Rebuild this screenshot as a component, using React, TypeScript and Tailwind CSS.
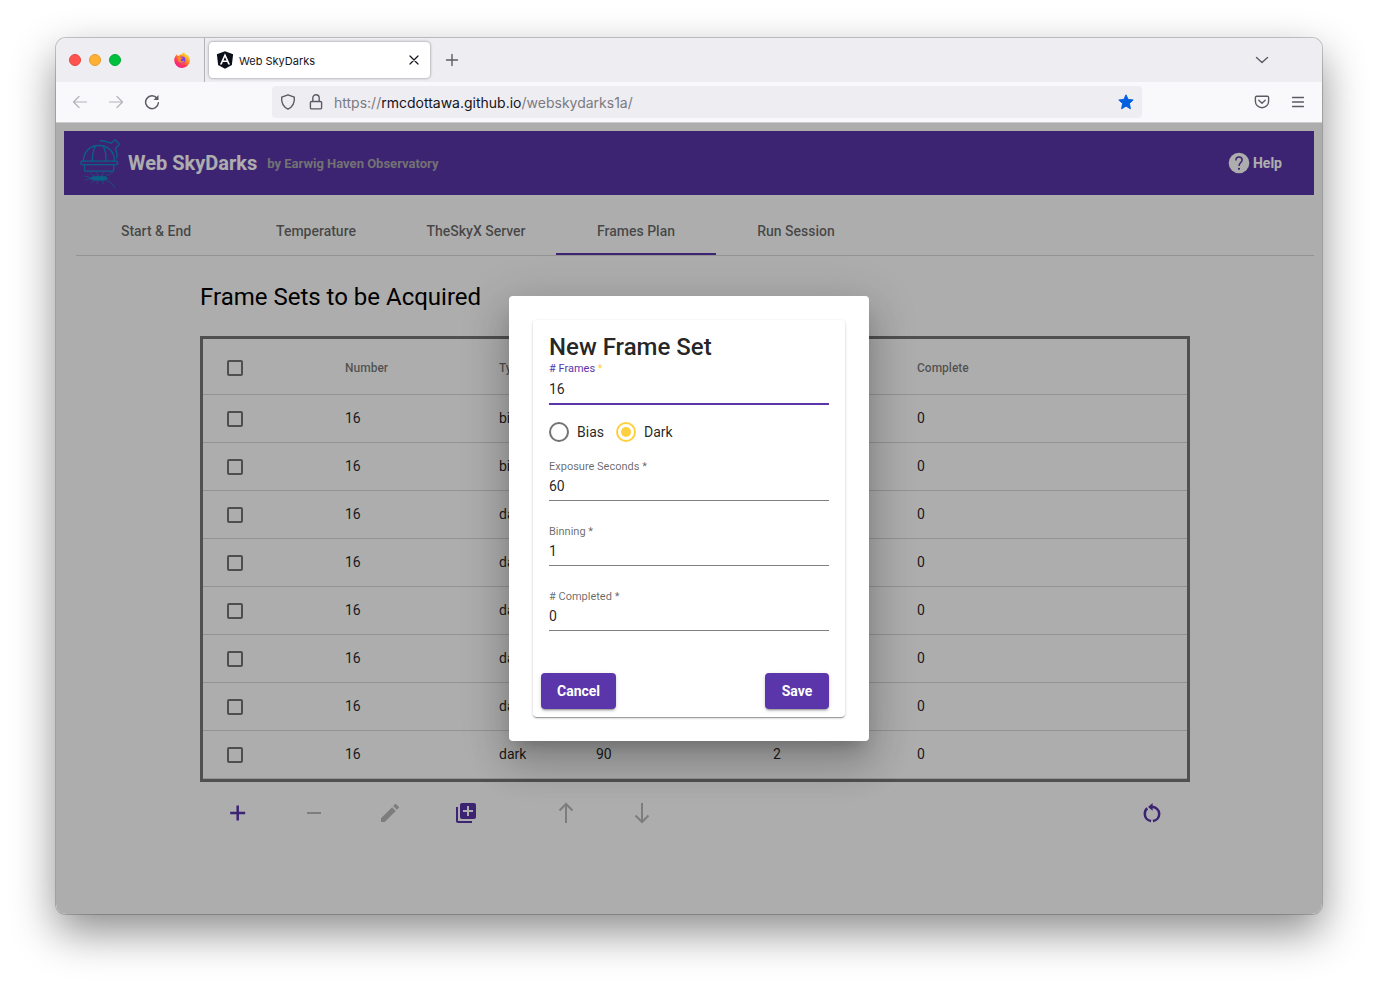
import React from "react";
import { FaAngular } from "react-icons/fa";
import { MdEdit, MdLibraryAdd, MdRemove } from "react-icons/md";

type LineIconProps = { d: string; className?: string; width?: number };

function LineIcon({ d, className = "size-4", width = 1.2 }: LineIconProps) {
  return (
    <svg
      viewBox="0 0 16 16"
      className={className}
      fill="none"
      stroke="currentColor"
      strokeWidth={width}
      strokeLinecap="round"
      strokeLinejoin="round"
      aria-hidden="true"
    >
      <path d={d} />
    </svg>
  );
}

function FirefoxIcon() {
  return (
    <svg viewBox="0 0 16 16" className="size-4" aria-hidden="true">
      <defs>
        <linearGradient id="fx-body" x1="0.85" y1="0.05" x2="0.2" y2="0.95">
          <stop offset="0" stopColor="#fff04a" />
          <stop offset="0.35" stopColor="#ff9a1f" />
          <stop offset="0.65" stopColor="#ff4550" />
          <stop offset="1" stopColor="#f5158c" />
        </linearGradient>
      </defs>
      <path
        d="M10.3.3c.4 1.4 1.3 2 2.2 2.8.3-.3.2-.8.2-.8 2 1.500 3.200 3.600 3.200 6.100A7.700 7.700 0 0 1 8.100 16 7.800 7.800 0 0 1 .2 8.300C.2 6.300.9 4.600 1.900 3.400l.5-1.100.9 1.500c.5-.2 1.100-.2 1.700-.1C6 2.700 7 2.300 8 2.300 8.500 1.300 9.200.6 10.300.3z"
        fill="url(#fx-body)"
      />
      <circle cx="8.200" cy="7.700" r="3.200" fill="#7a3ff2" />
      <path d="M3.500 5.200c1.200-.7 2.500-.6 3.500.2l1.800.3c-.1.900-.9 1.100-1.600 1.500-.9.500-.7 1.900 1 2 1.100 0 1.500-.7 2.500-.4-.7 1.700-2.400 2.300-4.100 1.800C4.500 10 3.300 7.700 3.500 5.200z" fill="#ff8a2a" />
    </svg>
  );
}

function ObservatoryLogo() {
  return (
    <svg
      viewBox="0 0 42 52"
      className="h-[52px] w-[42px] shrink-0"
      fill="none"
      stroke="#0f8fc4"
      strokeWidth="1.300"
      strokeLinecap="round"
      strokeLinejoin="round"
      aria-hidden="true"
    >
      <path d="M3.500 24C3.500 14.500 10 8.500 19 8.500s15.500 6 15.500 15.500" />
      <path d="M12.500 24c-.3-6.500.8-11.500 3.200-15.300M26 24c.3-6.500-.8-11.500-3.200-15.300" />
      <rect x="0.800" y="24.200" width="37" height="3.400" rx="1.700" />
      <path d="M4.500 28v4.500c0 1 .6 1.600 1.600 1.600h26c1 0 1.600-.6 1.600-1.600V28" />
      <path d="M20 3.800c4-.3 6.500.6 8.500 1.600l3 .6 3.500-3.400 4.400 4.700-3.600 3.700.2 2.400c1.200 2.500 1.200 5 .8 7.500" />
      <path
        strokeWidth="0.800"
        d="M10 41.300c3-2.400 6-1.900 9-1.900s6-.8 8.500 1.900c-2.500 2.700-5.500 1.900-8.500 1.900s-6 .5-9-1.900z"
        fill="#0f8fc4"
      />
      <path
        strokeWidth="0.700"
        d="M10 41c-2-1.200-3.500-1.700-5-1.700M10 41.600c-2 .8-3 1.300-4.500 1.200M14 39l-3-2.500M14 43.500l-3 2.800M18 39l-1-3.300M18 43.500l-1 3.300M22 39l1.500-3.300M22 43.500l1.500 3.300M25 40l5-3.300 4-2.700M25 42.500l5 2.500 3 3 2 3"
      />
    </svg>
  );
}

function BrowserChrome() {
  return (
    <header className="shrink-0">
      <div className="flex h-11 items-center bg-[#eeedf2] pl-[13px]">
        <div className="flex gap-2">
          <button aria-label="Close window" className="size-3 rounded-full border border-[#e6453f] bg-[#ff544d]" />
          <button aria-label="Minimize window" className="size-3 rounded-full border border-[#e79c2b] bg-[#ffb032]" />
          <button aria-label="Zoom window" className="size-3 rounded-full border border-[#00ab38] bg-[#00c03d]" />
        </div>
        <button aria-label="Firefox View" className="mr-3.5 ml-[53px]">
          <FirefoxIcon />
        </button>
        <div className="h-full w-px bg-[#b2b1b6]" />
        <div className="ml-1 flex h-9 w-[221px] items-center rounded bg-white px-1.5 shadow-[0_0_3px_rgba(0,0,0,0.45)]">
          <FaAngular className="size-5 text-[#0b0f19]" aria-hidden="true" />
          <span className="ml-1 flex-1 pt-0.5 font-[Inter,sans-serif] text-[11px] text-[#15141a]">Web SkyDarks</span>
          <button aria-label="Close tab" className="flex size-5 items-center justify-center text-[#15141a]">
            <LineIcon d="M4 4l8 8M12 4l-8 8" />
          </button>
        </div>
        <button aria-label="New tab" className="ml-1.5 flex size-8 items-center justify-center text-[#5b5b66]">
          <LineIcon d="M8 2.500v11M2.500 8h11" width={1.4} />
        </button>
        <button aria-label="List all tabs" className="mr-[42px] ml-auto flex size-9 items-center justify-center text-[#5b5b66]">
          <LineIcon d="M2.500 5.500L8 10.500l5.500-5" width={1.4} />
        </button>
      </div>
      <div className="flex h-[41px] items-center border-b border-[#cccccf] bg-[#f9f9fb] px-1.5">
        <button aria-label="Back" className="flex size-9 items-center justify-center text-[#b3b3b9]">
          <LineIcon d="M14.500 8h-13M7 2.500L1.500 8 7 13.500" />
        </button>
        <button aria-label="Forward" className="flex size-9 items-center justify-center text-[#b3b3b9]">
          <LineIcon d="M1.500 8h13M9 2.500L14.500 8 9 13.500" />
        </button>
        <button aria-label="Reload" className="flex size-9 items-center justify-center text-[#5b5b66]">
          <svg viewBox="0 0 16 16" className="size-4" fill="none" stroke="currentColor" strokeWidth="1.500" strokeLinecap="round" aria-hidden="true">
            <path d="M13 4.200A6.400 6.400 0 1 0 14.400 8.800" />
            <path d="M14.500 1v5h-5z" fill="currentColor" stroke="none" />
          </svg>
        </button>
        <div className="mx-[102px] flex h-8 flex-1 items-center rounded bg-[#eeedf2] px-2 text-[#5b5b66]">
          <LineIcon d="M8 .8l6.300 2.300c.5 5-1.300 9.500-6.300 12.100C3 12.600 1.200 8.100 1.700 3.100z" width={1.400} />
          <LineIcon className="ml-3 size-4" d="M3.600 7.500h8.800a1.200 1.200 0 0 1 1.200 1.200v5a1.200 1.200 0 0 1-1.200 1.200H3.600a1.200 1.200 0 0 1-1.200-1.200v-5a1.200 1.200 0 0 1 1.200-1.200zM4.800 7.500V4a3.200 3.200 0 0 1 6.400 0v3.500" width={1.400} />
          <p className="ml-2.5 flex-1 pt-0.5 font-[Inter,sans-serif] text-sm text-[#7b7a80]">
            https://<span className="text-[#15141a]">rmcdottawa.github.io</span>/webskydarks1a/
          </p>
          <button aria-label="Edit this bookmark" className="text-[#0060df]">
            <svg viewBox="0 0 16 16" className="size-4" fill="currentColor" stroke="currentColor" strokeLinejoin="round" aria-hidden="true">
              <path d="M8 .8l2.100 4.600 5.100.6-3.800 3.400 1 5.400L8 12.100l-4.400 2.700 1-5.400L.8 6l5.100-.6z" />
            </svg>
          </button>
        </div>
        <button aria-label="Save to Pocket" className="flex size-9 items-center justify-center text-[#5b5b66]">
          <LineIcon d="M2.600 2.300h10.800a1.200 1.200 0 0 1 1.200 1.200v3.700a6.600 6.600 0 0 1-13.200 0V3.500a1.200 1.200 0 0 1 1.200-1.200zM4.800 6.200L8 9.200l3.200-3" width={1.400} />
        </button>
        <button aria-label="Open application menu" className="flex size-9 items-center justify-center text-[#5b5b66]">
          <LineIcon d="M2.500 3.500h11M2.500 8h11M2.500 12.500h11" width={1.300} />
        </button>
      </div>
    </header>
  );
}

const tabs = ["Start & End", "Temperature", "TheSkyX Server", "Frames Plan", "Run Session"];

const frameSets = [
  { number: 16, type: "bias", exposure: "", binning: 1, complete: 0 },
  { number: 16, type: "bias", exposure: "", binning: 2, complete: 0 },
  { number: 16, type: "dark", exposure: "300", binning: 1, complete: 0 },
  { number: 16, type: "dark", exposure: "240", binning: 1, complete: 0 },
  { number: 16, type: "dark", exposure: "600", binning: 2, complete: 0 },
  { number: 16, type: "dark", exposure: "300", binning: 2, complete: 0 },
  { number: 16, type: "dark", exposure: "180", binning: 2, complete: 0 },
  { number: 16, type: "dark", exposure: "90", binning: 2, complete: 0 },
];

function Checkbox({ label }: { label: string }) {
  return (
    <input
      type="checkbox"
      aria-label={label}
      className="mt-0.5 block size-4 appearance-none rounded-xs border-2 border-black/55 checked:bg-[#5a36aa]"
    />
  );
}

function FrameTable() {
  return (
    <div className="border-3 border-[#777777]">
      <table className="w-full table-fixed text-left">
        <colgroup>
          <col className="w-[142px]" />
          <col className="w-[154px]" />
          <col className="w-[97px]" />
          <col className="w-[177px]" />
          <col className="w-36" />
          <col />
        </colgroup>
        <thead>
          <tr className="h-[55px] border-b border-black/15 text-xs text-black/55">
            <th className="pt-0.5 pl-6"><Checkbox label="Select all frame sets" /></th>
            <th className="pt-1 font-medium">Number</th>
            <th className="pt-1 font-medium">Type</th>
            <th className="pt-1 font-medium">Exposure</th>
            <th className="pt-1 font-medium">Binning</th>
            <th className="pt-1 font-medium">Complete</th>
          </tr>
        </thead>
        <tbody className="text-sm text-black/87">
          {frameSets.map((f, i) => (
            <tr key={i} className="h-12 border-b border-black/15">
              <td className="pl-6"><Checkbox label={`Select frame set ${i + 1}`} /></td>
              <td>{f.number}</td>
              <td>{f.type}</td>
              <td>{f.exposure}</td>
              <td>{f.binning}</td>
              <td>{f.complete}</td>
            </tr>
          ))}
        </tbody>
      </table>
    </div>
  );
}

function ArrowIcon({ down = false }: { down?: boolean }) {
  return (
    <svg viewBox="0 0 24 24" className="size-6" fill="none" stroke="currentColor" strokeWidth="2" aria-hidden="true">
      <path d={down ? "M12 2v18.500M5.500 14.500l6.500 6.500 6.500-6.500" : "M12 22V3.500M5.500 9.500L12 3l6.500 6.500"} />
    </svg>
  );
}

function PlusIcon() {
  return (
    <svg viewBox="0 0 24 24" className="size-6" fill="none" stroke="currentColor" strokeWidth="2.500" aria-hidden="true">
      <path d="M11.700 4.500v15M4.200 12h15" />
    </svg>
  );
}

function ResetIcon() {
  return (
    <svg viewBox="0 0 24 24" className="size-6" fill="none" stroke="currentColor" strokeWidth="2.500" aria-hidden="true">
      <path d="M11.500 5.800c4.400 0 7.700 3 7.700 7.100 0 3.700-2.700 6.600-6.300 7.100" />
      <path d="M7.300 7.300C5.700 8.600 4.800 10.600 4.800 12.900c0 3.700 2.700 6.600 6.300 7.100" />
      <path d="M12.600 2v7.800L8 5.900z" fill="currentColor" stroke="none" />
    </svg>
  );
}

function HelpIcon() {
  return (
    <svg viewBox="0 0 24 24" className="size-6" aria-hidden="true">
      <circle cx="12" cy="12" r="10.300" fill="currentColor" />
      <path d="M8.900 9.400c0-2.100 1.300-3.400 3.100-3.400s3.100 1.200 3.100 2.900c0 2.500-3.100 2.900-3.100 6.100" fill="none" stroke="#5a36aa" strokeWidth="1.500" />
      <circle cx="12" cy="17.800" r="1.100" fill="#5a36aa" />
    </svg>
  );
}

function ToolButton({ label, className, children }: { label: string; className: string; children: React.ReactNode }) {
  return (
    <button aria-label={label} className={`flex h-10 w-19 items-center justify-center ${className}`}>
      {children}
    </button>
  );
}

function FramesPage() {
  return (
    <div className="p-2">
      <div className="flex h-16 items-center bg-[#5a36aa] px-4 text-white">
        <ObservatoryLogo />
        <h1 className="ml-1.5 text-xl font-bold">Web SkyDarks</h1>
        <span className="ml-2.5 pt-0.5 text-[13px] font-bold text-[#a9a9a9]">by Earwig Haven Observatory</span>
        <button className="ml-auto flex items-center gap-0.5 px-4 text-sm font-bold">
          <HelpIcon />
          Help
        </button>
      </div>
      <nav className="mt-3 ml-3 flex h-[49px] border-b border-black/15">
        {tabs.map((tab) => (
          <button
            key={tab}
            className={
              tab === "Frames Plan"
                ? "w-40 border-b-2 border-[#5a36aa] pt-0.5 text-sm font-medium text-black/60"
                : "w-40 border-b-2 border-transparent pt-0.5 text-sm font-medium text-black/60"
            }
          >
            {tab}
          </button>
        ))}
      </nav>
      <main className="mr-[124px] ml-[136px]">
        <h2 className="mt-[25px] mb-[23px] text-2xl text-black">Frame Sets to be Acquired</h2>
        <FrameTable />
        <div className="mt-[11px] flex">
          <ToolButton label="Add frame set" className="text-[#5a36aa]"><PlusIcon /></ToolButton>
          <ToolButton label="Remove frame set" className="text-black/28"><MdRemove className="size-6" /></ToolButton>
          <ToolButton label="Edit frame set" className="text-black/28"><MdEdit className="size-6" /></ToolButton>
          <ToolButton label="Add several frame sets" className="text-[#5a36aa]"><MdLibraryAdd className="size-6" /></ToolButton>
          <ToolButton label="Move up" className="ml-6 text-black/28"><ArrowIcon /></ToolButton>
          <ToolButton label="Move down" className="text-black/28"><ArrowIcon down /></ToolButton>
          <ToolButton label="Reset completed" className="ml-auto text-[#5a36aa]"><ResetIcon /></ToolButton>
        </div>
      </main>
    </div>
  );
}

function Field({ id, label, value, active = false }: { id: string; label: string; value: string; active?: boolean }) {
  return (
    <div>
      <label
        htmlFor={id}
        className={active ? "block text-[11px]/[10px] text-[#5a36aa]" : "block text-[11px]/[10px] text-black/60"}
      >
        {label} <span className={active ? "text-[#ffd03d]" : ""}>*</span>
      </label>
      <input
        id={id}
        defaultValue={value}
        className={
          active
            ? "block h-[31px] w-full border-b-2 border-[#5a36aa] text-sm text-black/87 outline-none"
            : "block h-[29px] w-full border-b border-black/50 text-sm text-black/87 outline-none"
        }
      />
    </div>
  );
}

function Radio({ label, checked = false }: { label: string; checked?: boolean }) {
  return (
    <label className="flex items-center gap-2 text-sm text-black/87">
      <input
        type="radio"
        name="frame-type"
        defaultChecked={checked}
        className="grid size-5 appearance-none place-content-center rounded-full border-2 border-black/55 before:size-2.5 before:rounded-full checked:border-[#ffd03d] checked:before:bg-[#ffd03d]"
      />
      {label}
    </label>
  );
}

function NewFrameSetDialog() {
  return (
    <div
      role="dialog"
      aria-labelledby="dialog-title"
      className="w-[360px] rounded bg-white p-6 shadow-[0_11px_15px_-7px_rgba(0,0,0,0.2),0_24px_38px_3px_rgba(0,0,0,0.14),0_9px_46px_8px_rgba(0,0,0,0.12)]"
    >
      <form className="rounded px-4 pt-3 pb-2 shadow-[0_2px_1px_-1px_rgba(0,0,0,0.2),0_1px_1px_0_rgba(0,0,0,0.14),0_1px_3px_0_rgba(0,0,0,0.2)]">
        <h2 id="dialog-title" className="mb-0.5 text-2xl/[30px] font-medium text-black/87">New Frame Set</h2>
        <Field id="frames" label="# Frames" value="16" active />
        <div className="mt-[17px] mb-5 flex gap-3">
          <Radio label="Bias" />
          <Radio label="Dark" checked />
        </div>
        <div className="flex flex-col gap-[26px]">
          <Field id="exposure" label="Exposure Seconds" value="60" />
          <Field id="binning" label="Binning" value="1" />
          <Field id="completed" label="# Completed" value="0" />
        </div>
        <div className="mt-[42px] -ml-2 flex justify-between">
          <button type="button" className="h-9 rounded bg-[#5a36aa] px-4 text-sm font-bold text-white shadow-[0_3px_1px_-2px_rgba(0,0,0,0.2),0_2px_2px_rgba(0,0,0,0.14),0_1px_5px_rgba(0,0,0,0.12)]">
            Cancel
          </button>
          <button type="button" className="h-9 min-w-16 rounded bg-[#5a36aa] px-4 text-sm font-bold text-white shadow-[0_3px_1px_-2px_rgba(0,0,0,0.2),0_2px_2px_rgba(0,0,0,0.14),0_1px_5px_rgba(0,0,0,0.12)]">
            Save
          </button>
        </div>
      </form>
    </div>
  );
}

export default function App() {
  return (
    <div className="flex min-h-screen flex-col bg-white px-14 pt-[38px] pb-[74px] font-[Roboto,sans-serif]">
      <div className="flex flex-1 flex-col overflow-hidden rounded-[10px] shadow-[0_0_0_1px_rgba(0,0,0,0.2),0_18px_44px_rgba(0,0,0,0.45)]">
        <BrowserChrome />
        <div className="relative flex-1 bg-white">
          <FramesPage />
          <div className="absolute inset-0 flex items-center justify-center bg-black/32">
            <NewFrameSetDialog />
          </div>
        </div>
      </div>
    </div>
  );
}
